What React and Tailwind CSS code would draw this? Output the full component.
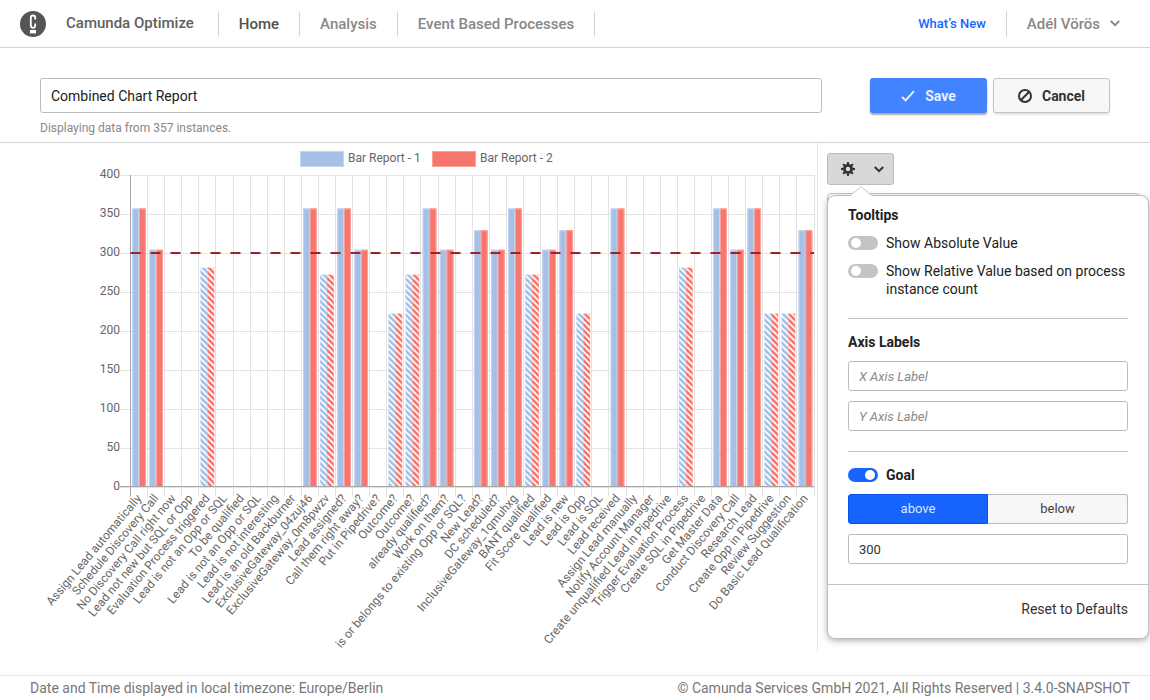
import React from "react";

const flowNodes = [
  { label: "Assign Lead automatically", value: 357 },
  { label: "Schedule Discovery Call", value: 304 },
  { label: "No Discovery Call right now" },
  { label: "Lead not new but SQL or Opp" },
  { label: "Evaluation Process triggered", value: 281 },
  { label: "Lead is not an Opp or SQL" },
  { label: "To be qualified" },
  { label: "Lead is not an Opp or SQL" },
  { label: "Lead is not interesting" },
  { label: "Lead is an old Backburner" },
  { label: "ExclusiveGateway_04zuj46", value: 357 },
  { label: "ExclusiveGateway_0m8pwzv", value: 272 },
  { label: "Lead assigned?", value: 357 },
  { label: "Call them right away?", value: 304 },
  { label: "Put in Pipedrive?" },
  { label: "Outcome?", value: 222 },
  { label: "Outcome?", value: 272 },
  { label: "already qualified?", value: 357 },
  { label: "Work on them?", value: 304 },
  { label: "is or belongs to existing Opp or SQL?" },
  { label: "New Lead?", value: 329 },
  { label: "DC scheduled?", value: 304 },
  { label: "InclusiveGateway_1qmuhxg", value: 357 },
  { label: "BANT qualified", value: 272 },
  { label: "Fit Score qualified", value: 304 },
  { label: "Lead is new", value: 329 },
  { label: "Lead is Opp", value: 222 },
  { label: "Lead is SQL" },
  { label: "Lead received", value: 357 },
  { label: "Assign Lead manually" },
  { label: "Notify Account Manager" },
  { label: "Create unqualified Lead in Pipedrive" },
  { label: "Trigger Evaluation Process", value: 281 },
  { label: "Create SQL in Pipedrive" },
  { label: "Get Master Data", value: 357 },
  { label: "Conduct Discovery Call", value: 304 },
  { label: "Research Lead", value: 357 },
  { label: "Create Opp in Pipedrive", value: 222 },
  { label: "Review Suggestion", value: 222 },
  { label: "Do Basic Lead Qualification", value: 329 },
];

const ticks = [0, 50, 100, 150, 200, 250, 300, 350, 400];
const goal = 300;

const left = 130.5;
const right = 814;
const top = 32;
const bottom = 343.5;
const step = (right - left) / flowNodes.length;
const toY = (value) => bottom - ((bottom - top) * value) / 400;

const series = [
  { name: "Bar Report - 1", fill: "#a5bfe7", stroke: "#c5d5ef", pattern: "stripes-blue" },
  { name: "Bar Report - 2", fill: "#f6766d", stroke: "#f9a29c", pattern: "stripes-red" },
];

function Chart() {
  return (
    <svg viewBox="0 0 817 508" className="block w-full overflow-visible text-[12px]" role="img" aria-label="Combined Chart Report">
      <defs>
        {series.map((s) => (
          <pattern key={s.pattern} id={s.pattern} width="6" height="6" patternUnits="userSpaceOnUse">
            <rect width="6" height="6" fill="#ffffff" />
            <path d="M-2 -2 L8 8 M-2 4 L2 8 M4 -2 L8 2" stroke={s.fill} strokeWidth="2.6" />
          </pattern>
        ))}
      </defs>

      {/* Legend */}
      <rect x="300.5" y="8.5" width="43" height="15" fill="#a5bfe7" stroke="#c5d5ef" />
      <text x="348" y="19" fill="#666666">Bar Report - 1</text>
      <rect x="432.5" y="8.5" width="43" height="15" fill="#f6766d" stroke="#f9a29c" />
      <text x="480" y="19" fill="#666666">Bar Report - 2</text>

      {/* Grid */}
      {ticks.map((t) => (
        <g key={t}>
          <line x1="120" x2={right} y1={Math.round(toY(t)) + 0.5} y2={Math.round(toY(t)) + 0.5} stroke="#e3e3e3" />
          <text x="120" y={toY(t) + 3} textAnchor="end" fill="#666666">{t}</text>
        </g>
      ))}
      {Array.from({ length: flowNodes.length + 1 }, (_, i) => (
        <line
          key={i}
          x1={Math.floor(left + i * step) + 0.5}
          x2={Math.floor(left + i * step) + 0.5}
          y1={top}
          y2={bottom + 10}
          stroke="#e3e3e3"
        />
      ))}
      <line x1="130.5" x2="130.5" y1={top} y2={bottom + 10} stroke="#a6a6a6" />

      {/* Bars */}
      {flowNodes.map(({ value }, i) =>
        value
          ? series.map((s, j) => {
              const x = left + i * step + step * 0.1 + j * step * 0.4;
              const solid = value >= goal;
              return (
                <g key={i + s.name}>
                  <rect x={x} y={toY(value)} width={step * 0.4} height={bottom - toY(value)} fill={solid ? s.fill : `url(#${s.pattern})`} />
                  <path
                    d={`M${x + 0.5} ${bottom} V${toY(value) + 0.5} H${x + step * 0.4 - 0.5} V${bottom}`}
                    fill="none"
                    stroke={s.stroke}
                    strokeOpacity={solid ? 1 : 0.3}
                  />
                </g>
              );
            })
          : null
      )}
      <line x1="120" x2={right} y1="343.5" y2="343.5" stroke="#a6a6a6" />
      <line x1={left} x2={right} y1="110" y2="110" stroke="#9f222b" strokeWidth="2" strokeDasharray="10 10" />

      {/* Category labels */}
      {flowNodes.map(({ label }, i) => {
        const x = left + (i + 0.5) * step;
        return (
          <text key={i} x={x} y="353" textAnchor="end" dominantBaseline="central" fill="#666666" transform={`rotate(-50 ${x} 353)`}>
            {label}
          </text>
        );
      })}
    </svg>
  );
}

function Logo() {
  return (
    <svg viewBox="0 0 26 26" className="size-[26px]" aria-hidden="true">
      <circle cx="13" cy="13" r="13" fill="#555555" />
      <path
        d="M15.2 8.6 V6.7 A2.2 2.2 0 0 0 10.8 6.7 V14.6 A2.2 2.2 0 0 0 15.2 14.6 V12.6"
        fill="none"
        stroke="#ffffff"
        strokeWidth="1.8"
      />
      <rect x="10" y="19" width="6" height="3.4" fill="#ffffff" />
    </svg>
  );
}

function Chevron({ className }) {
  return (
    <svg viewBox="0 0 10 7" className={className} aria-hidden="true">
      <path d="M0.8 1 L5 5.2 L9.2 1" fill="none" stroke="currentColor" strokeWidth="2" />
    </svg>
  );
}

function Gear() {
  const teeth = [0, 45, 90, 135, 180, 225, 270, 315];
  return (
    <svg viewBox="-7 -7 14 14" className="size-[14px]" aria-hidden="true">
      <circle r="3.6" fill="none" stroke="#333333" strokeWidth="2.8" />
      {teeth.map((a) => (
        <path key={a} d="M-1.3 -4.4 L-0.9 -7 H0.9 L1.3 -4.4 Z" fill="#333333" transform={`rotate(${a})`} />
      ))}
    </svg>
  );
}

function Toggle({ id, ...props }) {
  return (
    <input
      id={id}
      type="checkbox"
      role="switch"
      className="mt-[2px] h-[14px] w-[30px] shrink-0 appearance-none rounded-full bg-[#c4c4c4] before:block before:size-[10px] before:translate-x-[3px] before:translate-y-[2px] before:rounded-full before:bg-white checked:bg-[#1765ff] checked:before:translate-x-[17px]"
      {...props}
    />
  );
}

const field = "block h-[30px] w-full rounded-[3px] border border-[#bcbcbc] bg-white px-[10px] text-[13px] text-[#333333]";

function Configuration() {
  return (
    <div className="absolute top-[42px] left-0 w-[322px] rounded-[8px] border border-[#bcbcbc] bg-white text-[14px] leading-[18px] text-[#222222] shadow-[0_2px_6px_rgba(0,0,0,0.3)]">
      <svg viewBox="0 0 22 11" className="absolute -top-[10px] left-[22px] h-[11px] w-[22px]" aria-hidden="true">
        <path d="M0 11 V10 L11 0.5 L22 10 V11 Z" fill="#ffffff" />
        <path d="M0.5 9.5 L11 0.5 L21.5 9.5" fill="none" stroke="#c8c8c8" />
      </svg>
      <div className="px-5 pt-[10px]">
        <section className="flex flex-col gap-[10px] border-b border-[#c4c4c4] pb-5">
          <h3 className="font-bold">Tooltips</h3>
          <div className="flex gap-2">
            <Toggle id="absolute" />
            <label htmlFor="absolute">Show Absolute Value</label>
          </div>
          <div className="flex gap-2">
            <Toggle id="relative" />
            <label htmlFor="relative">Show Relative Value based on process instance count</label>
          </div>
        </section>
        <section className="flex flex-col gap-[10px] border-b border-[#c4c4c4] pt-[14px] pb-5">
          <h3 className="font-bold">Axis Labels</h3>
          <input className={`${field} placeholder:text-[#888888] placeholder:italic`} aria-label="X Axis Label" placeholder="X Axis Label" />
          <input className={`${field} placeholder:text-[#888888] placeholder:italic`} aria-label="Y Axis Label" placeholder="Y Axis Label" />
        </section>
        <section className="flex flex-col gap-[10px] pt-[14px] pb-5">
          <div className="flex gap-2">
            <Toggle id="goal" defaultChecked />
            <label htmlFor="goal" className="font-bold">Goal</label>
          </div>
          <div className="grid h-[30px] grid-cols-2 text-[13px]">
            <button className="rounded-l-[3px] border border-[#0a50e6] bg-[#1765ff] text-[#dbe7ff]">above</button>
            <button className="rounded-r-[3px] border border-l-0 border-[#bcbcbc] bg-[#f7f7f7] text-[#444444]">below</button>
          </div>
          <input className={field} aria-label="Goal value" defaultValue="300" />
        </section>
      </div>
      <div className="flex justify-end border-t border-[#c4c4c4] px-5 pt-[15px] pb-5">
        <button className="text-[#333333]">Reset to Defaults</button>
      </div>
    </div>
  );
}

export default function App() {
  return (
    <div className="flex min-h-screen flex-col bg-white font-['Roboto',sans-serif] text-[#333333]">
      {/* Header */}
      <header className="flex h-12 items-center border-b border-[#d3d3d3] px-5 text-[15px] font-medium text-[#888888]">
        <a href="#" className="flex items-center gap-5 pr-6 text-[#606060]">
          <Logo />
          Camunda Optimize
        </a>
        <nav className="flex leading-6">
          <a href="#" className="border-x border-[#d3d3d3] px-5 text-[#505050]">Home</a>
          <a href="#" className="border-r border-[#d3d3d3] px-5">Analysis</a>
          <a href="#" className="border-r border-[#d3d3d3] px-5">Event Based Processes</a>
        </nav>
        <button className="ml-auto pr-5 text-[13px] text-[#1765ff]">What’s New</button>
        <button className="flex items-center gap-[10px] border-l border-[#d3d3d3] pr-[10px] pl-5 leading-[26px]">
          Adél Vörös
          <Chevron className="h-[7px] w-[10px]" />
        </button>
      </header>

      {/* Report name */}
      <div className="flex items-start border-b border-[#d3d3d3] px-10 pt-[30px] pb-[6px]">
        <div className="flex-1">
          <input
            className="block h-[35px] w-full rounded-[3px] border border-[#bcbcbc] px-[10px] text-[14px] text-[#222222]"
            aria-label="Report name"
            defaultValue="Combined Chart Report"
          />
          <p className="mt-[7px] text-[12px] leading-4 text-[#888888]">Displaying data from 357 instances.</p>
        </div>
        <div className="ml-12 flex gap-[6px] text-[14px] font-bold">
          <button className="flex h-[35px] w-[117px] items-center justify-center gap-[10px] rounded-[3px] bg-[#4283ff] pt-px text-[#e8f0ff] shadow-[0_2px_2px_rgba(0,0,0,0.35)]">
            <svg viewBox="0 0 14 12" className="h-3 w-[14px]" aria-hidden="true">
              <path d="M1 7 L4.6 10.4 L13 1.2" fill="none" stroke="currentColor" strokeWidth="2" />
            </svg>
            Save
          </button>
          <button className="flex h-[35px] w-[117px] items-center justify-center gap-[10px] rounded-[3px] border border-[#c4c4c4] bg-[#f7f7f7] pt-px text-[#333333] shadow-[0_2px_2px_rgba(0,0,0,0.1)]">
            <svg viewBox="0 0 14 14" className="size-[14px]" aria-hidden="true">
              <circle cx="7" cy="7" r="6" fill="none" stroke="currentColor" strokeWidth="2" />
              <path d="M2.8 11.2 L11.2 2.8" stroke="currentColor" strokeWidth="2" />
            </svg>
            Cancel
          </button>
        </div>
      </div>

      {/* Report */}
      <main className="mb-6 flex flex-1">
        <div className="flex-1">
          <Chart />
        </div>
        <aside className="w-[333px] border-l border-[#e6e6e6] pt-[10px] pr-[10px] pl-[9px]">
          <div className="relative">
            <button
              aria-label="Configuration"
              className="flex h-8 w-[67px] items-center justify-between rounded-[3px] border border-[#bcbcbc] bg-[#d8d8d8] pr-[9px] pl-[13px] text-[#333333]"
            >
              <Gear />
              <Chevron className="h-[7px] w-[10px]" />
            </button>
            <div className="mt-2 h-[400px] rounded-[4px] border border-[#c4c4c4]" />
            <Configuration />
          </div>
        </aside>
      </main>

      <footer className="flex justify-between border-t border-[#e6e6e6] px-5 pl-[30px] text-[14px] leading-6 text-[#777777]">
        <span>Date and Time displayed in local timezone: Europe/Berlin</span>
        <span>© Camunda Services GmbH 2021, All Rights Reserved | 3.4.0-SNAPSHOT</span>
      </footer>
    </div>
  );
}
